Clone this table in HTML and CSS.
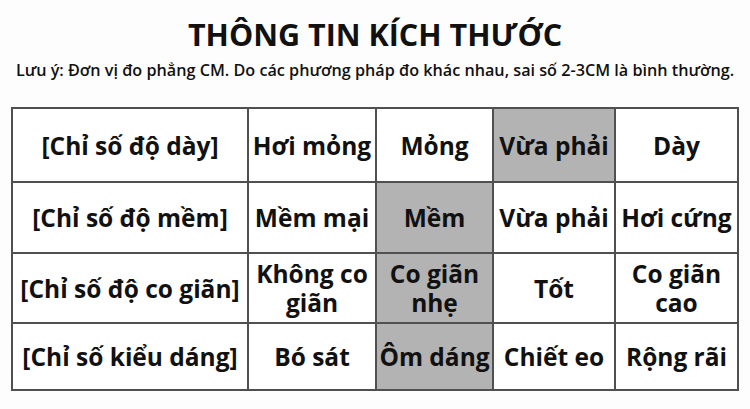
FILE: index.html
```html
<!DOCTYPE html>
<html lang="vi">
<head>
<meta charset="utf-8">
<link rel="stylesheet" href="styles.css">
</head>
<body>
<div class="page">
  <h1 class="title">THÔNG TIN KÍCH THƯỚC</h1>
  <p class="note">Lưu ý: Đơn vị đo phẳng CM. Do các phương pháp đo khác nhau, sai số 2-3CM là bình thường.</p>
  <table class="size-table">
    <colgroup>
      <col class="c-label"><col class="c1"><col class="c2"><col class="c3"><col class="c4">
    </colgroup>
    <tr class="r1">
      <th>[Chỉ số độ dày]</th>
      <td>Hơi mỏng</td>
      <td>Mỏng</td>
      <td class="on">Vừa phải</td>
      <td>Dày</td>
    </tr>
    <tr class="r2">
      <th>[Chỉ số độ mềm]</th>
      <td>Mềm mại</td>
      <td class="on">Mềm</td>
      <td>Vừa phải</td>
      <td>Hơi cứng</td>
    </tr>
    <tr class="r3">
      <th>[Chỉ số độ co giãn]</th>
      <td>Không co giãn</td>
      <td class="on">Co giãn nhẹ</td>
      <td>Tốt</td>
      <td>Co giãn cao</td>
    </tr>
    <tr class="r4">
      <th>[Chỉ số kiểu dáng]</th>
      <td>Bó sát</td>
      <td class="on">Ôm dáng</td>
      <td>Chiết eo</td>
      <td>Rộng rãi</td>
    </tr>
  </table>
</div>
</body>
</html>
```
FILE: styles.css
```css
html, body {
  margin: 0;
  padding: 0;
  background: #fdfdfd;
}
body {
  width: 750px;
  height: 409px;
  overflow: hidden;
  font-family: "Open Sans", "Liberation Sans", sans-serif;
  color: #111;
}
.page {
  padding: 14px 12px 0 12px;
  display: flex;
  flex-direction: column;
  align-items: center;
}
.title {
  margin: 0;
  font-size: 30.5px;
  line-height: 40px;
  font-weight: 700;
  letter-spacing: 0;
}
.note {
  margin: 6px 0 0 0;
  font-size: 16.2px;
  line-height: 20px;
  font-weight: 600;
  white-space: nowrap;
}
.size-table {
  margin-top: 27px;
  width: 726px;
  border-collapse: collapse;
  table-layout: fixed;
}
.c-label { width: 236px; }
.c1 { width: 128px; }
.c2 { width: 117px; }
.c3 { width: 122px; }
.c4 { width: 123px; }
.size-table th,
.size-table td {
  border: 2px solid #505050;
  text-align: center;
  vertical-align: middle;
  font-size: 24.5px;
  line-height: 29px;
  font-weight: 700;
  padding: 0 1px;
  background: #fff;
}
.size-table .on { background: #b3b3b3; }
.r1 th, .r1 td { height: 72px; }
.r2 th, .r2 td { height: 69px; }
.r3 th, .r3 td { height: 68px; }
.r4 th, .r4 td { height: 65px; }
```
